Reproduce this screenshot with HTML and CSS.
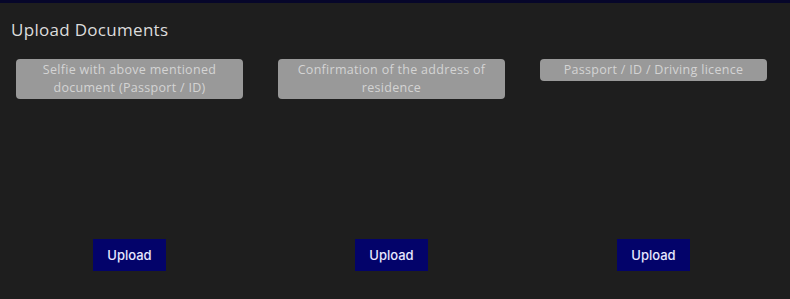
FILE: index.html
```html
<!DOCTYPE html>
<html lang="en">
<head>
<meta charset="utf-8">
<title>Upload Documents</title>
<link rel="stylesheet" href="styles.css">
</head>
<body>
<div class="topbar"></div>
<main class="panel">
  <h2 class="title">Upload Documents</h2>
  <div class="docs">
    <section class="doc">
      <div class="label">Selfie with above mentioned document (Passport / ID)</div>
      <div class="action"><button class="upload">Upload</button></div>
    </section>
    <section class="doc">
      <div class="label">Confirmation of the address of residence</div>
      <div class="action"><button class="upload">Upload</button></div>
    </section>
    <section class="doc">
      <div class="label">Passport / ID / Driving licence</div>
      <div class="action"><button class="upload">Upload</button></div>
    </section>
  </div>
</main>
</body>
</html>
```

FILE: styles.css
```css
html, body {
  margin: 0;
  padding: 0;
  background: #1e1e1e;
  height: 100%;
}
body {
  font-family: "Open Sans", "Noto Sans", sans-serif;
  color: #d6d6d6;
}
.topbar {
  height: 3px;
  background: #06062a;
}
.title {
  margin: 0;
  padding: 16px 0 0 11px;
  font-size: 17px;
  font-weight: 500;
  line-height: 22px;
  color: #dcdcdc;
  letter-spacing: 0.3px;
}
.docs {
  display: grid;
  grid-template-columns: repeat(3, 262px);
  margin-top: 18px;
}
.doc {
  height: 212px;
  display: flex;
  flex-direction: column;
  justify-content: space-between;
}
.label {
  margin: 0 19px 0 16px;
  background: #999999;
  color: #d4d4d4;
  border-radius: 4px;
  font-size: 12.5px;
  line-height: 18px;
  padding: 2px 6px;
  text-align: center;
  letter-spacing: 0.3px;
}
.action {
  display: flex;
  justify-content: center;
  padding-right: 3px;
}
.upload {
  width: 73px;
  height: 32px;
  padding: 0;
  border: none;
  background: #03036a;
  color: #e8e8ff;
  font-family: Inter, "Open Sans", sans-serif;
  font-size: 13px;
  font-weight: 500;
  cursor: pointer;
}
```
